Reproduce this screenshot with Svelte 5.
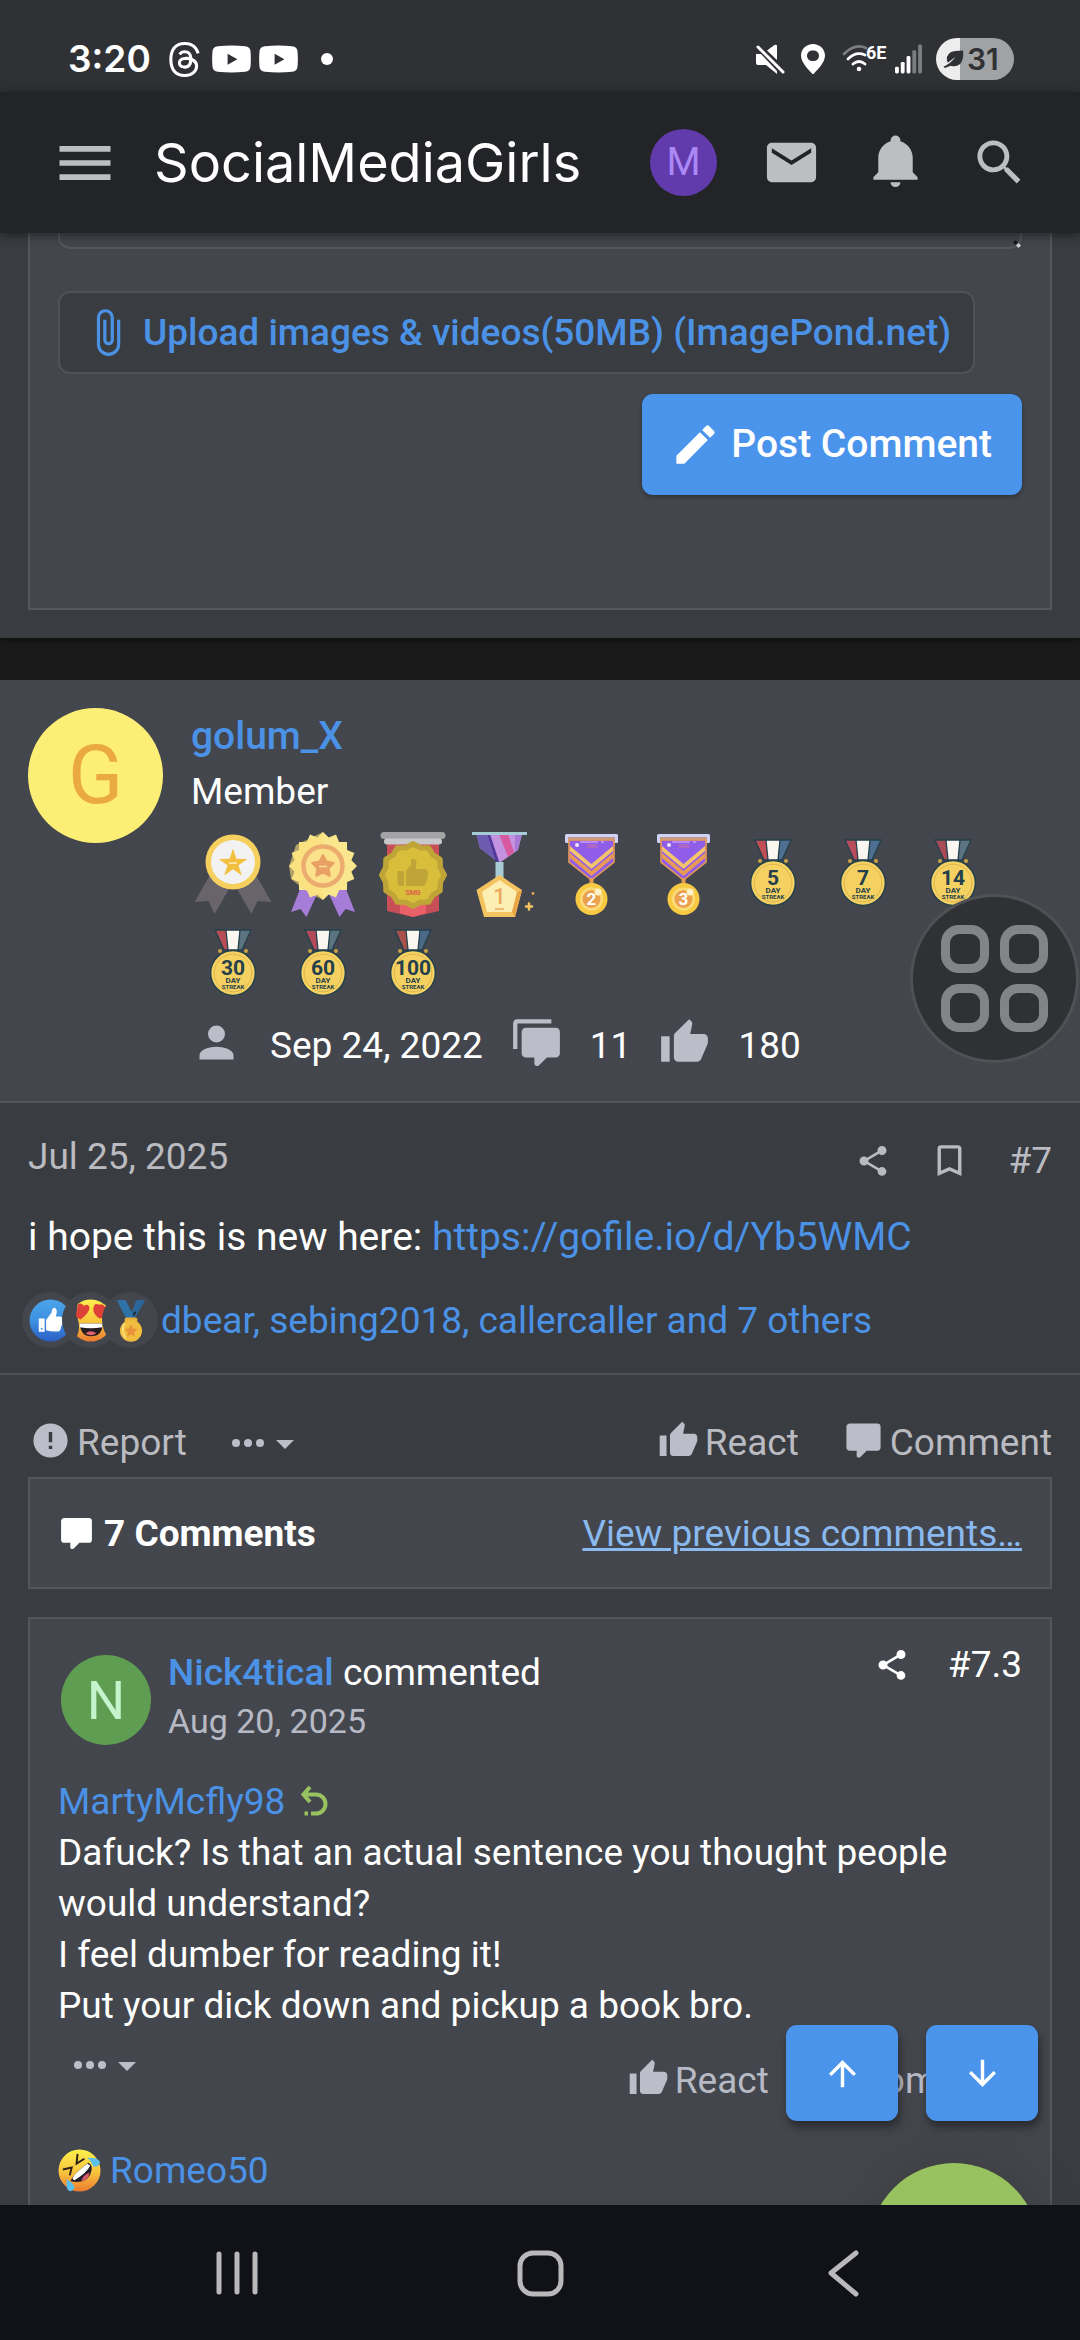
<script>
  const paths = {
    menu: 'M3,6H21V8H3V6M3,11H21V13H3V11M3,16H21V18H3V16Z',
    mail: 'M20,8L12,13L4,8V6.2L12,11.2L20,6.2M20,4H4C2.89,4 2,4.89 2,6V18A2,2 0 0,0 4,20H20A2,2 0 0,0 22,18V6C22,4.89 21.1,4 20,4Z',
    bell: 'M14,20A2,2 0 0,1 12,22A2,2 0 0,1 10,20H14M12,1A2,2 0 0,1 14,3V3.4C17,4.3 19,7.03 19,10V16L21,18V19H3V18L5,16V10C5,7.03 7,4.3 10,3.4V3A2,2 0 0,1 12,1Z',
    search: 'M9.5,3A6.5,6.5 0 0,1 16,9.5C16,11.11 15.41,12.59 14.44,13.73L14.71,14H15.5L20.5,19L19,20.5L14,15.5V14.71L13.73,14.44C12.59,15.41 11.11,16 9.5,16A6.5,6.5 0 0,1 3,9.5A6.5,6.5 0 0,1 9.5,3M9.5,5C7,5 5,7 5,9.5C5,12 7,14 9.5,14C12,14 14,12 14,9.5C14,7 12,5 9.5,5Z',
    clip: 'M16.5,6V17.5A4,4 0 0,1 12.5,21.5A4,4 0 0,1 8.5,17.5V5A2.5,2.5 0 0,1 11,2.5A2.5,2.5 0 0,1 13.5,5V15.5A1,1 0 0,1 12.5,16.5A1,1 0 0,1 11.5,15.5V6H10V15.5A2.5,2.5 0 0,0 12.5,18A2.5,2.5 0 0,0 15,15.5V5A4,4 0 0,0 11,1A4,4 0 0,0 7,5V17.5A5.5,5.5 0 0,0 12.5,23A5.5,5.5 0 0,0 18,17.5V6H16.5Z',
    pencil: 'M20.71,7.04C21.1,6.65 21.1,6 20.71,5.63L18.37,3.29C18,2.9 17.35,2.9 16.96,3.29L15.12,5.12L18.87,8.87M3,17.25V21H6.75L17.81,9.93L14.06,6.18L3,17.25Z',
    user: 'M12,4A4,4 0 0,1 16,8A4,4 0 0,1 12,12A4,4 0 0,1 8,8A4,4 0 0,1 12,4M12,14C16.42,14 20,15.79 20,18V20H4V18C4,15.79 7.58,14 12,14Z',
    comments: 'M12,23A1,1 0 0,1 11,22V19H7A2,2 0 0,1 5,17V7C5,5.89 5.9,5 7,5H21A2,2 0 0,1 23,7V17A2,2 0 0,1 21,19H16.9L13.2,22.71C13,22.9 12.75,23 12.5,23V23H12M3,15H1V3A2,2 0 0,1 3,1H19V3H3V15Z',
    comment: 'M9,22A1,1 0 0,1 8,21V18H4A2,2 0 0,1 2,16V4C2,2.89 2.9,2 4,2H20A2,2 0 0,1 22,4V16A2,2 0 0,1 20,18H13.9L10.2,21.71C10,21.9 9.75,22 9.5,22V22H9Z',
    thumb: 'M23,10C23,8.89 22.1,8 21,8H14.68L15.64,3.43C15.66,3.33 15.67,3.22 15.67,3.11C15.67,2.7 15.5,2.32 15.23,2.05L14.17,1L7.59,7.58C7.22,7.95 7,8.45 7,9V19A2,2 0 0,0 9,21H18C18.83,21 19.54,20.5 19.84,19.78L22.86,12.73C22.95,12.5 23,12.26 23,12V10M1,21H5V9H1V21Z',
    share: 'M18,16.08C17.24,16.08 16.56,16.38 16.04,16.85L8.91,12.7C8.96,12.47 9,12.24 9,12C9,11.76 8.96,11.53 8.91,11.3L15.96,7.19C16.5,7.69 17.21,8 18,8A3,3 0 0,0 21,5A3,3 0 0,0 18,2A3,3 0 0,0 15,5C15,5.24 15.04,5.47 15.09,5.7L8.04,9.81C7.5,9.31 6.79,9 6,9A3,3 0 0,0 3,12A3,3 0 0,0 6,15C6.79,15 7.5,14.69 8.04,14.19L15.16,18.34C15.11,18.55 15.08,18.77 15.08,19C15.08,20.61 16.39,21.91 18,21.91C19.61,21.91 20.92,20.61 20.92,19A2.92,2.92 0 0,0 18,16.08Z',
    bookmark: 'M17,18L12,15.82L7,18V5H17M17,3H7A2,2 0 0,0 5,5V21L12,18L19,21V5C19,3.89 18.1,3 17,3Z',
    alert: 'M13,13H11V7H13M13,17H11V15H13M12,2A10,10 0 0,0 2,12A10,10 0 0,0 12,22A10,10 0 0,0 22,12A10,10 0 0,0 12,2Z',
    up: 'M13,20H11V8L5.5,13.5L4.08,12.08L12,4.16L19.92,12.08L18.5,13.5L13,8V20Z',
    down: 'M11,4H13V16L18.5,10.5L19.92,11.92L12,19.84L4.08,11.92L5.5,10.5L11,16V4Z'
  };

  const streaks = [
    { days: '5', left: '#c14d55', right: '#4f7092' },
    { days: '7', left: '#b84c5a', right: '#4f7092' },
    { days: '14', left: '#a94b55', right: '#5c7482' },
    { days: '30', left: '#b84c55', right: '#5c7482' },
    { days: '60', left: '#b04a58', right: '#5c7482' },
    { days: '100', left: '#a8504c', right: '#4c6a88' }
  ];

  function spikes(cx, cy, outer, inner, n) {
    const pts = [];
    for (let i = 0; i < n * 2; i++) {
      const r = i % 2 ? inner : outer;
      const a = (Math.PI * i) / n - Math.PI / 2;
      pts.push(`${(cx + r * Math.cos(a)).toFixed(1)},${(cy + r * Math.sin(a)).toFixed(1)}`);
    }
    return pts.join(' ');
  }

  let draft = $state('');
</script>

{#snippet icon(name, size)}
  <svg class="icon {size}" viewBox="0 0 24 24" aria-hidden="true"><path d={paths[name]} /></svg>
{/snippet}

{#snippet more()}
  <svg class="more" viewBox="0 0 62 24" aria-hidden="true">
    <circle cx="4" cy="12" r="4" /><circle cx="16" cy="12" r="4" /><circle cx="28" cy="12" r="4" />
    <path d="M44 9h18l-9 9z" />
  </svg>
{/snippet}

{#snippet streak(s)}
  <svg class="medal" viewBox="0 0 90 90" role="img" aria-label="{s.days} day streak">
    <path d="M27 11L36 31L40 31L38 11Z" fill={s.left} />
    <path d="M38 11H52L50 31H40Z" fill="#faf7f0" />
    <path d="M52 11H63L54 31H50Z" fill={s.right} />
    <path d="M27 11H63L54 31H36ZM38 11L40 31M52 11L50 31" fill="none" stroke="#23404c" stroke-width="1.3" />
    <circle cx="32" cy="32" r="2" fill="#c9a545" /><circle cx="58" cy="32" r="2" fill="#c9a545" />
    <circle cx="45" cy="54" r="22.4" fill="#f5d162" stroke="#23404c" stroke-width="1.5" />
    <circle cx="45" cy="54" r="18.8" fill="none" stroke="#ddb650" stroke-width="1" />
    <text class="days" x="45" y="55.5">{s.days}</text>
    <text class="day" x="45" y="63.5">DAY</text>
    <text class="word" x="45" y="69.5">STREAK</text>
  </svg>
{/snippet}

{#snippet vmedal(n, box)}
  <svg class="medal" viewBox={box} role="img" aria-label="Medal {n}">
    <rect x="17" y="5" width="53" height="9" rx="1.5" fill="#cfd2f3" />
    <rect x="20" y="8" width="47" height="5" fill="#c39a8e" />
    <path d="M21 11H66V33L43.5 51L21 33Z" fill="#8f5de8" stroke="#e69a55" stroke-width="1.6" />
    <path d="M22 17L43.500 35L65 17V22L43.500 40L22 22Z" fill="#f4c46c" />
    <path d="M22 24L43.500 42L65 24V29L43.500 47L22 29Z" fill="#e99a55" />
    <path d="M32 13H50M53 13H56" stroke="#b78cf7" stroke-width="2" />
    <circle cx="29" cy="16" r="2" fill="#efe6ff" />
    <text class="brand" x="44" y="19">SMG</text>
    <rect x="41.500" y="49" width="4" height="7" fill="#e69a55" />
    <circle cx="43.500" cy="70" r="16" fill="#f8c943" />
    <circle cx="43.500" cy="70" r="11.500" fill="#fbdc77" />
    <circle cx="43.500" cy="70" r="9" fill="#eba14e" />
    <text class="rank" x="43.500" y="76">{n}</text>
    <circle cx="50" cy="63" r="3.500" fill="#fff1c8" />
  </svg>
{/snippet}

<div class="screen">
  <div class="status">
    <div class="status-side">
      <span class="clock">3:20</span>
      <svg class="threads" viewBox="0 0 192 192" aria-label="Threads">
        <path d="M141.5 89a66 66 0 0 0-2.500-1.100c-1.500-27.300-16.400-42.900-41.500-43.100h-.3c-15 0-27.500 6.400-35.100 18.100l13.800 9.400c5.700-8.700 14.700-10.500 21.300-10.500h.2c8.200.1 14.500 2.400 18.500 7.100 3 3.400 4.900 8.100 5.900 14-7.300-1.200-15.200-1.600-23.700-1.100-23.800 1.400-39.100 15.300-38.100 34.600.5 9.800 5.400 18.200 13.800 23.700 7 4.700 16.100 7 25.600 6.400 12.500-.7 22.300-5.400 29.100-14.100 5.200-6.600 8.500-15.200 9.900-25.900 5.900 3.600 10.300 8.300 12.800 14 4.100 9.700 4.400 25.500-8.600 38.500-11.400 11.300-25 16.300-45.700 16.400-22.900-.2-40.300-7.500-51.500-21.800C35.200 140.200 29.700 120.700 29.500 96c.2-24.700 5.700-44.200 16.300-57.700C57 24 74.400 16.700 97.300 16.500c23.100.2 40.700 7.500 52.400 21.900 5.700 7 10 15.900 12.900 26.200l16.100-4.300c-3.500-12.700-8.900-23.700-16.300-32.800C147.700 9.400 125.600.2 97.300 0h-.1C68.900.2 47.100 9.400 32.500 28 19.500 44.500 12.800 67.500 12.600 96c.2 28.500 6.900 51.500 19.900 68 14.600 18.600 36.400 27.800 64.700 28h.1c25.200-.2 42.900-6.800 57.500-21.400 19.100-19.100 18.500-43 12.200-57.600-4.500-10.500-13.100-19.100-25.500-24zM98 129.500c-10.500.6-21.300-4.100-21.900-14.100-.4-7.400 5.300-15.700 22.400-16.700 2-.1 3.900-.2 5.800-.2 6.200 0 12 .6 17.300 1.800-2 24.600-13.500 28.600-23.600 29.200z" />
      </svg>
      <svg class="yt" viewBox="0 0 40 28" aria-label="YouTube"><path fill-rule="evenodd" d="M6 1Q20-.5 34 1Q39 1.500 39.500 6Q40.200 14 39.500 22Q39 26.500 34 27Q20 28.500 6 27Q1 26.500 .5 22Q-.2 14 .5 6Q1 1.500 6 1ZM16 8.500V20L26 14.200Z" /></svg>
      <svg class="yt" viewBox="0 0 40 28" aria-label="YouTube"><path fill-rule="evenodd" d="M6 1Q20-.5 34 1Q39 1.500 39.500 6Q40.200 14 39.500 22Q39 26.500 34 27Q20 28.500 6 27Q1 26.500 .5 22Q-.2 14 .5 6Q1 1.500 6 1ZM16 8.500V20L26 14.200Z" /></svg>
      <span class="dot"></span>
    </div>
    <div class="status-right">
      <svg class="mute" viewBox="0 0 30 30" aria-label="Muted">
        <path d="M1 10H6L22 27V30L11 21H3Q1 21 1 19Z" /><path d="M12 6.500L19.500 1Q22 0 22 2V16Z" />
        <path d="M3 3L28 28" stroke="#fff" stroke-width="3" stroke-linecap="round" />
      </svg>
      <svg class="pin" viewBox="0 0 24 32" aria-label="Location"><path fill-rule="evenodd" d="M12 1C18.500 1 24 6 24 12.500C24 20 16 27 13 30.500Q12 31.500 11 30.500C8 27 0 20 0 12.500C0 6 5.500 1 12 1ZM12 7.500A5.300 5.300 0 1 0 12 18A5.300 5.300 0 1 0 12 7.500Z" /></svg>
      <svg class="wifi" viewBox="0 0 44 30" aria-label="WiFi 6E">
        <g fill="none" stroke-width="2.800" stroke-linecap="round"><path d="M2 10Q13-1 24 4" stroke="#7c7d80" /><path d="M6 15Q14 7 23 11" stroke="#fff" /><path d="M11 20Q17 15 23 20" stroke="#fff" /></g>
        <circle cx="17" cy="25" r="2.300" />
        <text x="24" y="15">6E</text>
      </svg>
      <svg class="signal" viewBox="0 0 28 30" aria-label="Signal">
        <rect x="0" y="23" width="4" height="7" rx="1.500" /><rect x="6" y="18" width="4" height="12" rx="1.500" /><rect x="12" y="12" width="4" height="18" rx="1.500" />
        <rect x="18" y="6" width="4" height="24" rx="1.500" fill="#7c7d80" /><rect x="24" y="0" width="4" height="30" rx="1.500" fill="#7c7d80" />
      </svg>
      <span class="battery">
        <svg class="leaf" viewBox="0 0 22 20" aria-hidden="true"><path d="M5 14Q2 7 8 3Q12 1 21 1Q22 9 19 14Q15 19 8 17L2 19.500L.5 18Q8 15 13 8Q9 11 5 14Z" /></svg>31
      </span>
    </div>
  </div>

  <header class="bar">
    <button class="plain" aria-label="Menu">{@render icon('menu', 's68')}</button>
    <a class="brand-name" href="#home">SocialMediaGirls</a>
    <nav class="bar-links" aria-label="Account">
      <a class="avatar me" href="#account" aria-label="Account">M</a>
      <a href="#inbox" aria-label="Inbox">{@render icon('mail', 's59')}</a>
      <a href="#alerts" aria-label="Alerts">{@render icon('bell', 's59')}</a>
      <a href="#search" aria-label="Search">{@render icon('search', 's59')}</a>
    </nav>
  </header>

  <main>
    <section class="reply">
      <form class="composer" onsubmit={(e) => e.preventDefault()}>
        <div class="field">
          <textarea aria-label="Write a comment" bind:value={draft}></textarea>
          <svg class="grip" viewBox="0 0 8 8" aria-hidden="true"><path d="M0 2.500L2.500 0L5 2.500L2.500 5Z" fill="#17181b" /><path d="M3 5.500L5.500 3L8 5.500L5.500 8Z" fill="#d0d0d2" /></svg>
        </div>
        <button type="button" class="upload">{@render icon('clip', 's51')}Upload images &amp; videos(50MB) (ImagePond.net)</button>
        <button class="post">{@render icon('pencil', 's51')}Post Comment</button>
      </form>
    </section>

    <article>
      <div class="author">
        <a class="avatar big" href="#golum" aria-label="golum_X">G</a>
        <div class="who">
          <a class="name" href="#golum">golum_X</a>
          <div class="role">Member</div>
          <div class="medals">
            <svg class="medal" viewBox="0 0 90 90" role="img" aria-label="Star award">
              <path d="M21.500 47L6.500 73L20.500 72L26.500 85L41 60Z" fill="#68646a" /><path d="M68.500 47L83.500 73L69.500 72L63.500 85L49 60Z" fill="#68646a" />
              <circle cx="45" cy="33" r="27.500" fill="#f6d05e" /><circle cx="45" cy="33" r="22" fill="#f2f2f3" />
              <polygon points={spikes(45, 34.500, 15, 5.800, 5)} fill="#f2bf3f" />
              <path d="M41 34H49" stroke="#fff0c0" stroke-width="1.500" />
            </svg>
            <svg class="medal" viewBox="0 0 90 90" role="img" aria-label="Sunburst award">
              <path d="M24 55L13 83L22.500 80L28.500 88L39 65Z" fill="#a57dd8" /><path d="M66 55L77 83L67.500 80L61.500 88L51 65Z" fill="#a57dd8" />
              <polygon points={spikes(45, 37, 34, 29, 16)} fill="#fae68d" />
              <path d="M45 3V71L31 64L13 50L11 37L18 16Z" fill="#fbe07a" opacity=".6" />
              <circle cx="45" cy="37" r="19.500" fill="#fbe28a" stroke="#ecac70" stroke-width="4.500" />
              <polygon points={spikes(45, 37.500, 11.500, 6, 5)} fill="#e9a065" stroke="#e9a065" stroke-width="2" stroke-linejoin="round" />
              <path d="M41 37.500H49" stroke="#fbe28a" stroke-width="1.500" />
            </svg>
            <svg class="medal" viewBox="0 0 90 90" role="img" aria-label="Like award">
              <path d="M19 14H71V82L45 88L19 82Z" fill="#c84f58" /><path d="M32 76H58V84L45 88L32 84Z" fill="#ea6068" />
              <rect x="12.500" y="3" width="65" height="7" rx="3.500" fill="#a3a3a5" /><rect x="16" y="9.500" width="58" height="6" rx="3" fill="#c9c9cb" />
              <polygon points={spikes(45, 46, 32, 29, 12)} fill="#bfa537" stroke="#bfa537" stroke-width="4" stroke-linejoin="round" />
              <polygon points={spikes(45, 46, 26.500, 24, 12)} fill="#d9be3c" stroke="#d9be3c" stroke-width="3" stroke-linejoin="round" />
              <path d="M29.500 42H36V57H32Q29.500 57 29.500 54ZM38 57V42L43 36V31Q46 28 48.500 32L48 40H57Q61 41 60 46L58 54Q57 57 54 57Z" fill="#bfa537" />
              <text class="smg" x="45" y="66">SMG</text>
            </svg>
            <svg class="medal" viewBox="0 0 90 90" role="img" aria-label="First place">
              <path d="M18.500 5H64L60 21L41.500 34L22 19Z" fill="#c493df" /><path d="M18.500 5H29L37 31L22 19Z" fill="#6c5cb0" /><path d="M29 5H32L41.500 34L37 31Z" fill="#503b9c" /><path d="M41 5H50L56 23L50 28Z" fill="#d7599f" /><path d="M57 5H64L60 21L57 22Z" fill="#a67ad4" />
              <rect x="14" y="3" width="55" height="3" fill="#a5ccd4" /><rect x="37.500" y="33" width="8" height="18" fill="#a9cdd6" />
              <path d="M41.500 46L64 61L57 88H26L18.500 61Z" fill="#f2c35f" /><path d="M41.500 51L59 63L54 83H29L24 63Z" fill="#fdeeb3" /><path d="M57 88L64 61L59 63L54 83Z" fill="#e8a648" />
              <text class="first" x="41.500" y="75">1</text>
              <path d="M37 80H46" stroke="#eba95b" stroke-width="1.500" />
              <path d="M71 74.500V80.500M68 77.500H74" stroke="#f2c35f" stroke-width="2.500" stroke-linecap="round" /><circle cx="75" cy="64.500" r="1.400" fill="#e8a648" />
            </svg>
            {@render vmedal(2, '0 0 90 90')}
            {@render vmedal(3, '-2 0 90 90')}
            {#each streaks as s}
              {@render streak(s)}
            {/each}
          </div>
          <div class="stats">
            {@render icon('user', 's51')}<span>Sep 24, 2022</span>
            {@render icon('comments', 's51')}<span>11</span>
            {@render icon('thumb', 's51')}<span>180</span>
          </div>
        </div>
      </div>

      <div class="body">
        <div class="meta">
          <a class="muted" href="#date">Jul 25, 2025</a>
          <div class="tools muted">
            <a href="#share" aria-label="Share">{@render icon('share', 's36')}</a>
            <a href="#bookmark" aria-label="Bookmark">{@render icon('bookmark', 's41')}</a>
            <a href="#7">#7</a>
          </div>
        </div>
        <p class="message">i hope this is new here: <a href="#gofile">https://gofile.io/d/Yb5WMC</a></p>
        <div class="reactions">
          <span class="ring">
            <svg viewBox="0 0 44 44" role="img" aria-label="Like">
              <defs><linearGradient id="gl" x2="0" y2="1"><stop stop-color="#4aa5ea" /><stop offset=".5" stop-color="#3e90e0" /><stop offset="1" stop-color="#2a5fc4" /></linearGradient></defs>
              <circle cx="22" cy="22" r="21.500" fill="url(#gl)" />
              <path fill="#fff" d="M10 20H16V33.500H10ZM17.500 32V21.500L23 14Q23.500 9 26 9Q30 10 27.500 18H32Q35.500 19 34 23Q35 26 33 28Q33 31 31 33Q24 34 17.500 32Z" /><circle cx="13" cy="30.500" r="1" fill="#3e90e0" />
            </svg>
          </span>
          <span class="ring">
            <svg viewBox="0 0 44 44" role="img" aria-label="Love">
              <defs><linearGradient id="gy" x2="0" y2="1"><stop stop-color="#fdf04c" /><stop offset=".55" stop-color="#f8c33c" /><stop offset="1" stop-color="#ea7a31" /></linearGradient></defs>
              <path d="M22 .5A21.500 21.500 0 1 1 8 38Q12 31 9 20Q7 12 9 5Q15 .5 22 .5Z" fill="url(#gy)" />
              <path d="M9 6Q12 3 15 7Q20 4 21 9Q21 14 12 21Q8 20 7 17ZM25 9Q26 3 31 6Q34 4 37 8Q45 6 43 14Q41 18 31 20Q24 15 25 9Z" fill="#dd4138" />
              <path d="M11 25H34Q35 38 22 38Q12 38 11 25Z" fill="#241c20" /><path d="M11 25H34V29Q22 31 11 29Z" fill="#fff" /><path d="M17 35Q22 31 28 35Q22 39 17 35Z" fill="#e0626e" />
            </svg>
          </span>
          <span class="ring">
            <svg viewBox="0 0 44 44" role="img" aria-label="Medal">
              <path d="M28 1L37 1L26 21H20Z" fill="#2c6597" /><path d="M8 1H17L25 17L22 21H18Z" fill="#2f72a8" /><path d="M25 17L27 13" stroke="#1d2b36" stroke-width="2" />
              <rect x="16" y="19" width="13" height="5" rx="2" fill="#e9b13c" /><circle cx="22.500" cy="32.500" r="11.300" fill="#f0bd3e" /><path d="M16 25Q12 32 17 40" stroke="#f9dc7d" stroke-width="2" fill="none" />
              <polygon points={spikes(22.500, 33, 7, 3.400, 5)} fill="#e8923c" />
            </svg>
          </span>
          <a class="reactors" href="#reactions">dbear, sebing2018, callercaller and 7 others</a>
        </div>
      </div>

      <div class="below">
        <div class="actions muted">
          <button class="plain">{@render icon('alert', 's41 lift')}Report</button>
          <button class="plain menu" aria-label="More options">{@render more()}</button>
          <button class="plain push">{@render icon('thumb', 's41 lift')}React</button>
          <button class="plain">{@render icon('comment', 's41 lift')}Comment</button>
        </div>

        <div class="box summary">
          <strong>{@render icon('comment', 's37')}7 Comments</strong>
          <a class="previous" href="#previous">View previous comments…</a>
        </div>

        <div class="box comment">
          <div class="comment-head">
            <a class="avatar mid" href="#nick" aria-label="Nick4tical">N</a>
            <div class="comment-who">
              <div><a class="strong" href="#nick">Nick4tical</a> commented</div>
              <a class="when" href="#when">Aug 20, 2025</a>
            </div>
            <div class="tools">
              <a href="#share" aria-label="Share">{@render icon('share', 's36')}</a>
              <a href="#7.3">#7.3</a>
            </div>
          </div>
          <div class="mention">
            <a href="#marty">MartyMcfly98</a>
            <svg class="back" viewBox="0 0 28 32" aria-hidden="true"><path d="M9 2L2.500 9.500L9 17M3 9.500H15A9.500 9.500 0 0 1 15 28.500H10M7 28.500H3.500" /></svg>
          </div>
          <p>Dafuck? Is that an actual sentence you thought people would understand?<br />I feel dumber for reading it!<br />Put your dick down and pickup a book bro.</p>
          <div class="comment-actions">
            <button class="plain menu" aria-label="More options">{@render more()}</button>
            <div class="comment-buttons">
              <button class="plain">{@render icon('thumb', 's41 lift')}React</button>
              <button class="plain">{@render icon('comment', 's41 lift')}Comment</button>
            </div>
          </div>
          <div class="laughs">
            <svg class="rofl" viewBox="0 0 44 44" role="img" aria-label="Haha">
              <circle cx="22" cy="22" r="21.500" fill="url(#gy)" />
              <path d="M20 5L19 15L27 10M5 21L14 19L12 27" fill="none" stroke="#2c2018" stroke-width="2" />
              <path d="M13 33Q14 27 31 14Q37 17 33 26Q28 36 13 33Z" fill="#241c28" /><path d="M15 31Q14 27 30 15L33 17Q30 24 17 32Z" fill="#fff" /><path d="M24 33Q25 27 32 24Q32 31 24 33Z" fill="#dd5b70" />
              <path d="M30 9Q40 8 43 13Q42 19 36 18Q34 12 30 9ZM9 31Q17 36 17 40Q14 45 10 42Q8 38 9 31Z" fill="#5cc0ee" />
            </svg>
            <a href="#romeo">Romeo50</a>
          </div>
        </div>
      </div>
    </article>

    <button class="assist" aria-label="Assistive menu"><i></i><i></i><i></i><i></i></button>
    <div class="jump">
      <button aria-label="Scroll to top">{@render icon('up', 's41')}</button>
      <button aria-label="Scroll to bottom">{@render icon('down', 's41')}</button>
    </div>
    <button class="fab" aria-label="New post"></button>
  </main>

  <nav class="system" aria-label="System">
    <button class="plain" aria-label="Recents"><svg viewBox="0 0 48 48"><path d="M6 5V43M24 5V43M42 5V43" /></svg></button>
    <button class="plain" aria-label="Home"><svg viewBox="0 0 48 48"><rect x="4" y="4" width="41" height="41" rx="13" /></svg></button>
    <button class="plain" aria-label="Back"><svg viewBox="0 0 48 48"><path d="M37 4L12 24L37 45" /></svg></button>
  </nav>
</div>

<style>
  :global(body) { margin: 0; background: #1a1a1a; }
  .screen { display: flex; flex-direction: column; height: 100vh; overflow: hidden; font: 400 37px/51px Roboto, sans-serif; color: #fff; }
  .screen :global(*) { box-sizing: border-box; }
  a { color: #4b92e6; text-decoration: none; }
  p { margin: 0; }
  svg { display: block; flex: none; }
  .icon { fill: currentColor; }
  .s36 { width: 36px; height: 36px; }
  .s37 { width: 37px; height: 37px; }
  .s41 { width: 41px; height: 41px; }
  .s51 { width: 51px; height: 51px; }
  .s59 { width: 59px; height: 59px; }
  .s68 { width: 68px; height: 68px; }
  .lift { margin-bottom: 5px; }
  .muted, .muted a { color: #b9bbc0; }
  button { font: inherit; color: inherit; cursor: pointer; }
  .plain { display: flex; align-items: center; gap: 6px; padding: 0; border: 0; background: none; }
  .avatar { display: flex; align-items: center; justify-content: center; flex: none; border-radius: 50%; }

  .status { display: flex; justify-content: space-between; align-items: center; flex: none; height: 92px; padding: 26px 66px 0 68px; background: #303135; fill: #fff; }
  .status-side, .status-right { display: flex; align-items: center; }
  .clock { font: 600 37px/44px Inter, sans-serif; margin-right: 16px; }
  .threads { width: 35px; height: 35px; margin-right: 10px; }
  .yt { width: 39px; height: 28px; margin-right: 8px; }
  .dot { width: 12px; height: 12px; margin-left: 15px; border-radius: 50%; background: #fff; }
  .mute { width: 30px; height: 30px; margin-right: 16px; }
  .pin { width: 24px; height: 32px; margin-right: 17px; }
  .wifi { width: 44px; height: 30px; margin-right: 9px; overflow: visible; }
  .wifi text { font: 700 18px Roboto, sans-serif; }
  .signal { width: 27px; height: 30px; margin-right: 14px; }
  .battery { display: flex; align-items: center; gap: 3px; width: 78px; height: 42px; padding-left: 7px; border-radius: 21px; background: linear-gradient(90deg, #ededee 24px, #a1a2a4 24px); color: #303135; font: 600 30px/42px Inter, sans-serif; }
  .leaf { width: 21px; height: 20px; fill: #303135; }

  .bar { position: relative; z-index: 2; display: flex; align-items: center; flex: none; height: 141px; padding: 0 51px; background: #232428; box-shadow: 0 2px 10px rgba(0, 0, 0, .5); }
  .bar > .plain, .bar-links a { color: #bdbec0; }
  .brand-name { margin-left: 35px; font: 400 54px/64px Inter, sans-serif; color: #fff; }
  .bar-links { display: flex; align-items: center; gap: 45px; margin-left: auto; }
  .bar-links .me { width: 67px; height: 67px; background: #613bab; color: #ac87f5; font-size: 39px; }

  main { position: relative; flex: 1; min-height: 0; overflow: hidden; background: #1a1a1a; }
  .reply { padding: 0 28px 28px; margin-bottom: 42px; background: #393c40; box-shadow: 0 2px 6px rgba(0, 0, 0, .5); }
  .composer { display: flex; flex-direction: column; padding: 0 28px 113px; border: 2px solid #55575c; border-top: 0; background: #43464d; }
  .field { position: relative; margin-bottom: 42px; }
  textarea { display: block; width: 100%; height: 16px; padding: 0 16px; border: 2px solid #55575c; border-top: 0; border-radius: 0 0 12px 12px; background: transparent; color: #fff; font: inherit; resize: none; outline: 0; overflow: hidden; }
  .grip { position: absolute; right: 1px; bottom: 1px; width: 8px; height: 8px; }
  .upload { display: flex; align-items: center; align-self: flex-start; gap: 10px; height: 83px; padding: 0 22px; margin-bottom: 20px; border: 2px solid #4f5256; border-radius: 12px; background: #393c40; color: #4b92e6; font-weight: 500; white-space: nowrap; }
  .post { display: flex; align-items: center; align-self: flex-end; gap: 10px; height: 101px; padding: 0 30px 0 28px; border: 0; border-radius: 11px; background: #4a94ec; color: #fff; font-size: 39px; font-weight: 500; box-shadow: 0 2px 4px rgba(0, 0, 0, .3); }

  .author { display: flex; gap: 28px; padding: 28px 28px 30px; border-bottom: 2px solid #55575c; background: #43464d; }
  .big { width: 135px; height: 135px; background: #fdef75; color: #eba941; font-size: 81px; }
  .who { min-width: 0; flex: 1; }
  .name { display: block; margin-bottom: 2px; font-size: 39px; line-height: 56px; font-weight: 500; }
  .medals { display: flex; flex-wrap: wrap; margin: 12px -3px 8px; }
  .medal { width: 90px; height: 90px; }
  .medal text { text-anchor: middle; font-family: Roboto, sans-serif; font-weight: 700; }
  .medal .days { font-size: 21px; fill: #23404c; }
  .medal .day { font-size: 8px; fill: #23404c; }
  .medal .word { font-size: 6px; fill: #23404c; }
  .medal .brand { font-size: 5px; fill: #c46fb0; }
  .medal .rank { font-size: 17px; fill: #fff; }
  .medal .smg { font-size: 7px; fill: #dd5f48; }
  .medal .first { font-size: 22px; font-weight: 500; fill: #eba95b; }
  .stats { display: flex; align-items: flex-end; gap: 28px; height: 54px; }
  .stats .icon { align-self: flex-start; color: #bbbec8; }

  .body { padding: 28px 28px 25px; border-bottom: 2px solid #4f5256; background: #393c40; }
  .meta { display: flex; justify-content: space-between; }
  .tools { display: flex; align-items: center; gap: 38px; }
  .meta .tools { padding-top: 4px; }
  .message { margin: 24px 0 27px; font-size: 39px; line-height: 55px; }
  .reactions { display: flex; align-items: center; height: 56px; margin-left: -6px; }
  .ring { display: flex; align-items: center; justify-content: center; width: 56px; height: 56px; margin-right: -16px; border-radius: 50%; background: #43464d; }
  .ring svg, .rofl { width: 43px; height: 43px; }
  .reactors { margin-left: 19px; }

  .below { padding: 42px 28px 28px; background: #393c40; }
  .actions { display: flex; align-items: center; height: 51px; margin-bottom: 9px; padding-left: 2px; }
  .actions .icon, .comment-actions .icon, .more { color: #bbbec8; fill: #bbbec8; }
  .more { width: 62px; height: 24px; }
  .actions .menu { margin-left: 45px; }
  .push { margin-left: auto; margin-right: 44px; }
  .box { border: 2px solid #55575c; background: #43464d; }
  .summary { display: flex; align-items: center; justify-content: space-between; height: 112px; padding: 0 28px; margin-bottom: 28px; }
  .summary strong { display: flex; align-items: center; gap: 9px; }
  .previous { color: #89b9ee; text-decoration: underline; text-decoration-thickness: 3px; }
  .comment { padding: 20px 28px 60px; }
  .comment-head { display: flex; align-items: flex-start; margin-bottom: 30px; }
  .mid { width: 90px; height: 90px; margin: 16px 15px 0 3px; background: #5f9e52; color: #c4f3cc; font-size: 54px; }
  .comment-who { padding-top: 10px; padding-left: 2px; line-height: 48px; flex: 1; }
  .strong { font-weight: 500; }
  .when { display: block; color: #b7bac4; font-size: 34px; }
  .comment .tools a { color: #fff; }
  .mention { display: flex; align-items: center; gap: 16px; height: 52px; }
  .back { width: 28px; height: 32px; fill: none; stroke: #98c25f; stroke-width: 4; }
  .comment-actions { display: flex; justify-content: space-between; align-items: flex-start; height: 75px; margin-bottom: 39px; color: #b7bac4; }
  .comment-actions .menu { height: 68px; margin-left: 16px; }
  .comment-buttons { display: flex; gap: 44px; height: 51px; margin-top: 24px; }
  .laughs { display: flex; align-items: center; gap: 9px; }

  .assist { position: absolute; top: 661px; right: 1px; display: grid; grid-template-columns: 48px 48px; place-content: center; gap: 11px; width: 169px; height: 169px; padding: 0; border: 3px solid #505155; border-radius: 50%; background: #303135; }
  .assist i { height: 48px; border: 9px solid #838487; border-radius: 18px; }
  .jump { position: absolute; right: 42px; bottom: 84px; display: flex; gap: 28px; }
  .jump button { display: flex; align-items: center; justify-content: center; width: 112px; height: 96px; padding: 0; border: 0; border-radius: 11px; background: #4a94ec; color: #fff; box-shadow: 2px 6px 8px rgba(0, 0, 0, .4); }
  .fab { position: absolute; right: 41px; bottom: -128px; width: 170px; height: 170px; border: 0; border-radius: 50%; background: #98c25f; box-shadow: 0 0 40px rgba(60, 58, 54, .7); }

  .system { position: relative; display: flex; justify-content: space-around; align-items: center; flex: none; height: 135px; padding: 0 85px; background: #111217; }
  .system svg { width: 48px; height: 48px; fill: none; stroke: #b9b9bb; stroke-width: 5; stroke-linecap: round; stroke-linejoin: round; }
</style>
